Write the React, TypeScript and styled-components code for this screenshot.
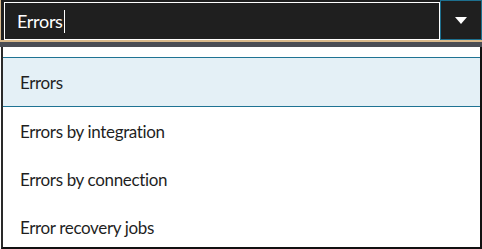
import React from 'react';
import styled, { createGlobalStyle } from 'styled-components';

const Global = createGlobalStyle`
  html, body { margin: 0; padding: 0; background: #ffffff; }
  body { font-family: Lato, "Noto Sans", "Liberation Sans", sans-serif; }
`;

const Frame = styled.div`
  width: 482px;
  height: 249px;
  display: flex;
  flex-direction: column;
  overflow: hidden;
  background: #ffffff;
`;

const Combo = styled.div`
  flex: 0 0 42px;
  display: flex;
  background: #1f1f1f;
  border-left: 1px solid #d9b98b;
  border-bottom: 2px solid #d9b98b;
  box-sizing: border-box;
`;

const Field = styled.div`
  flex: 1;
  margin: 2px 0 0 3px;
  border: 1px solid #ffffff;
  display: flex;
  align-items: center;
  padding-left: 12px;
  color: #ffffff;
  font-size: 18px;
  letter-spacing: -0.3px;
`;

const Caret = styled.span`
  display: inline-block;
  width: 1px;
  height: 23px;
  background: #ffffff;
  margin-left: 1px;
`;

const Toggle = styled.div`
  width: 42px;
  border: 1px solid #1d6f8e;
  box-sizing: border-box;
  display: flex;
  align-items: center;
  justify-content: center;
`;

const Band = styled.div`
  flex: 0 0 5px;
  background: #4a4d55;
`;

const List = styled.ul`
  flex: 1;
  min-height: 0;
  overflow: hidden;
  margin: 0 0 0 1px;
  padding: 10px 0 0;
  list-style: none;
  border-left: 2px solid #2a2a2a;
  border-right: 2px solid #111111;
  border-bottom: 2px solid #111111;
`;

const Item = styled.li<{ $active?: boolean }>`
  box-sizing: border-box;
  display: flex;
  align-items: center;
  padding-left: 17px;
  font-size: 17px;
  letter-spacing: -0.35px;
  color: #1f1f1f;
  background: ${p => (p.$active ? '#e4f0f6' : 'transparent')};
  border-top: ${p => (p.$active ? '1px solid #1f7393' : 'none')};
  border-bottom: ${p => (p.$active ? '1px solid #1f7393' : 'none')};
  height: ${p => (p.$active ? '50px' : '48px')};
`;

const items = ['Errors', 'Errors by integration', 'Errors by connection', 'Error recovery jobs'];

export default function App() {
  return (
    <Frame>
      <Global />
      <Combo>
        <Field>
          Errors
          <Caret />
        </Field>
        <Toggle>
          <svg width="12" height="7" viewBox="0 0 12 7">
            <path d="M0 0 L12 0 L6 7 Z" fill="#ffffff" />
          </svg>
        </Toggle>
      </Combo>
      <Band />
      <List>
        {items.map((t, i) => (
          <Item key={t} $active={i === 0}>
            {t}
          </Item>
        ))}
      </List>
    </Frame>
  );
}
